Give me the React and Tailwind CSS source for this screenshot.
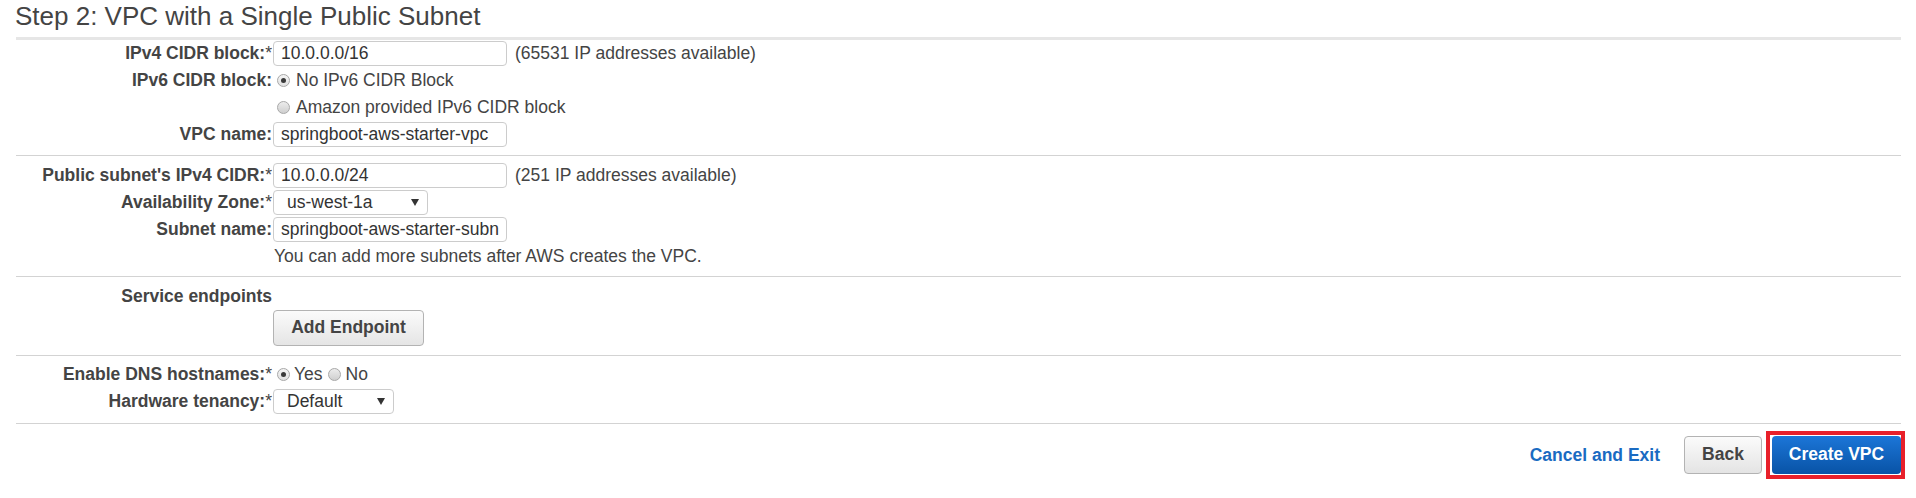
import React from "react";

function Label({ children, req }) {
  return (
    <div className="w-[256px] shrink-0 text-right font-bold whitespace-nowrap">
      {children}
      {req && <span className="font-normal">*</span>}
    </div>
  );
}

function Input({ value, w = "w-[234px]" }) {
  return (
    <div
      className={`ml-[1px] ${w} h-[25px] border border-[#cccccc] rounded-[4px] pl-[7px] flex items-center overflow-hidden whitespace-nowrap bg-white text-[#333]`}
    >
      {value}
    </div>
  );
}

function Select({ value, w }) {
  return (
    <div
      className={`ml-[1px] ${w} h-[25px] border border-[#cccccc] rounded-[4px] pl-[13px] pr-[8px] flex items-center justify-between bg-white text-[#333]`}
    >
      <span>{value}</span>
      <svg width="8" height="7" viewBox="0 0 8 7">
        <path d="M0 0 L8 0 L4 7 Z" fill="#333" />
      </svg>
    </div>
  );
}

function Radio({ checked }) {
  return (
    <span
      className={`w-[13px] h-[13px] rounded-full border border-[#a8a8a8] flex items-center justify-center shrink-0 ${
        checked
          ? "bg-linear-to-b from-[#f4f4f4] to-[#e2e2e2]"
          : "bg-linear-to-b from-[#ececec] to-[#cfcfcf]"
      }`}
    >
      {checked && <span className="w-[5px] h-[5px] rounded-full bg-[#3a3a3a]" />}
    </span>
  );
}

function Row({ children }) {
  return <div className="flex items-center h-[27px]">{children}</div>;
}

export default function App() {
  return (
    <div className="w-[1916px] h-[498px] bg-white text-[#444] overflow-hidden font-['Liberation_Sans',Arial,sans-serif] text-[17.5px] leading-[27px]">
      <div className="h-[37px] pl-[15px] text-[26px] leading-[32px] text-[#444]">
        Step 2: VPC with a Single Public Subnet
      </div>
      <div className="ml-[16px] mr-[15px]">
        {/* Section 1 */}
        <div className="border-t-[3px] border-[#e6e6e6] pb-[7px]">
          <Row>
            <Label req>IPv4 CIDR block:</Label>
            <Input value="10.0.0.0/16" />
            <span className="ml-[8px]">(65531 IP addresses available)</span>
          </Row>
          <Row>
            <Label>IPv6 CIDR block:</Label>
            <span className="ml-[5px] flex items-center gap-[6px]">
              <Radio checked />
              <span>No IPv6 CIDR Block</span>
            </span>
          </Row>
          <Row>
            <div className="w-[256px] shrink-0" />
            <span className="ml-[5px] flex items-center gap-[6px]">
              <Radio />
              <span>Amazon provided IPv6 CIDR block</span>
            </span>
          </Row>
          <Row>
            <Label>VPC name:</Label>
            <Input value="springboot-aws-starter-vpc" />
          </Row>
        </div>

        {/* Section 2 */}
        <div className="border-t border-[#d3d3d3] pt-[6px] pb-[6px]">
          <Row>
            <Label req>Public subnet's IPv4 CIDR:</Label>
            <Input value="10.0.0.0/24" />
            <span className="ml-[8px]">(251 IP addresses available)</span>
          </Row>
          <Row>
            <Label req>Availability Zone:</Label>
            <Select value="us-west-1a" w="w-[155px]" />
          </Row>
          <Row>
            <Label>Subnet name:</Label>
            <Input value="springboot-aws-starter-subn" />
          </Row>
          <Row>
            <div className="w-[256px] shrink-0" />
            <span className="ml-[2px]">You can add more subnets after AWS creates the VPC.</span>
          </Row>
        </div>

        {/* Section 3 */}
        <div className="border-t border-[#d3d3d3] pt-[6px] pb-[9px]">
          <Row>
            <Label>Service endpoints</Label>
          </Row>
          <div className="flex">
            <div className="w-[256px] shrink-0" />
            <button className="ml-[1px] w-[151px] h-[36px] border border-[#b3b3b3] rounded-[4px] bg-linear-to-b from-[#fbfbfb] to-[#e5e5e5] font-bold text-[#444] leading-none">
              Add Endpoint
            </button>
          </div>
        </div>

        {/* Section 4 */}
        <div className="border-t border-[#d3d3d3] pt-[5px] pb-[8px]">
          <Row>
            <Label req>Enable DNS hostnames:</Label>
            <span className="ml-[5px] flex items-center">
              <Radio checked />
              <span className="ml-[4px]">Yes</span>
              <span className="ml-[5px]">
                <Radio />
              </span>
              <span className="ml-[5px]">No</span>
            </span>
          </Row>
          <Row>
            <Label req>Hardware tenancy:</Label>
            <Select value="Default" w="w-[121px]" />
          </Row>
        </div>

        {/* Footer */}
        <div className="border-t border-[#d3d3d3] pt-[12px] flex justify-end items-center">
          <a className="font-bold text-[#1a6bc2] mr-[24px] cursor-pointer">Cancel and Exit</a>
          <button className="w-[78px] h-[38px] border border-[#b3b3b3] rounded-[4px] bg-linear-to-b from-[#fbfbfb] to-[#e4e4e4] font-bold text-[#444] leading-none mr-[10px]">
            Back
          </button>
          <div className="relative">
            <button className="w-[129px] h-[38px] rounded-[4px] bg-linear-to-b from-[#1c76d8] to-[#0853a6] font-bold text-white leading-none block">
              Create VPC
            </button>
            <div className="absolute -left-[6px] -right-[4px] -top-[5px] -bottom-[5px] border-4 border-[#e8202a] pointer-events-none" />
          </div>
        </div>
      </div>
    </div>
  );
}
